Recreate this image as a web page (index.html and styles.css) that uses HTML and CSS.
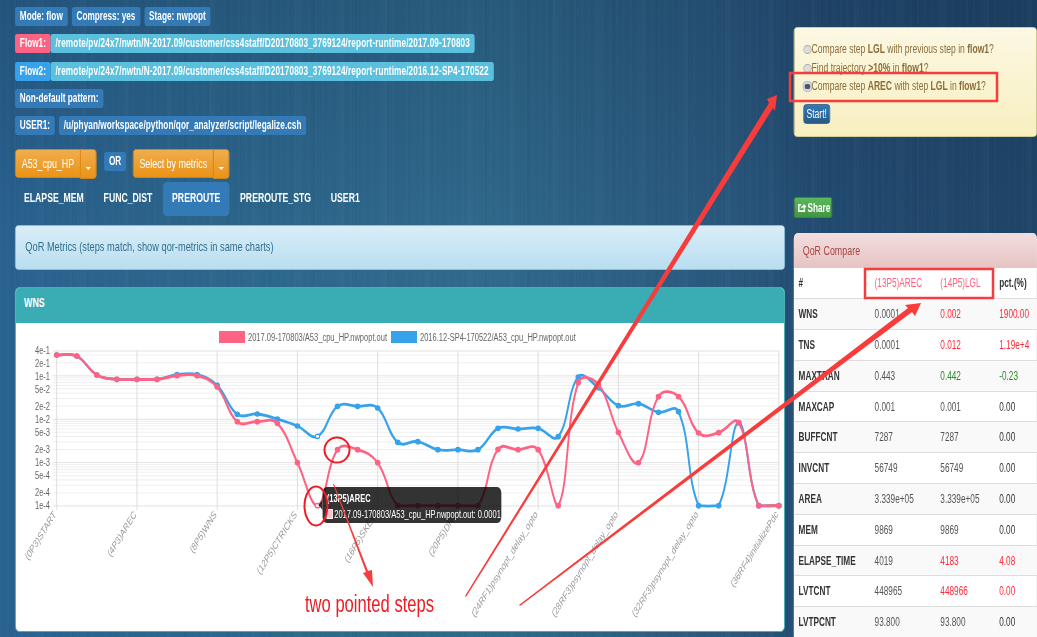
FILE: index.html
```html
<!DOCTYPE html>
<html lang="en">
<head>
    <meta charset="UTF-8">
    <meta name="viewport" content="width=device-width, initial-scale=1.0">
    <title>QoR Analyzer</title>
    <link rel="stylesheet" href="styles.css">
</head>
<body>
    <div class="page">
        <div class="main-col">
            <div class="info-rows">
                <div class="label-row">
                    <span class="label">Mode: flow</span>
                    <span class="label">Compress: yes</span>
                    <span class="label">Stage: nwpopt</span>
                </div>
                <div class="label-row joined">
                    <span class="label label-flow1">Flow1:</span>
                    <span class="label label-path">/remote/pv/24x7/nwtn/N-2017.09/customer/css4staff/D20170803_3769124/report-runtime/2017.09-170803</span>
                </div>
                <div class="label-row joined">
                    <span class="label label-flow2">Flow2:</span>
                    <span class="label label-path">/remote/pv/24x7/nwtn/N-2017.09/customer/css4staff/D20170803_3769124/report-runtime/2016.12-SP4-170522</span>
                </div>
                <div class="label-row">
                    <span class="label">Non-default pattern:</span>
                </div>
                <div class="label-row">
                    <span class="label">USER1:</span>
                    <span class="label label-script">/u/phyan/workspace/python/qor_analyzer/script/legalize.csh</span>
                </div>
            </div>

            <div class="select-row">
                <div class="btn-group">
                    <button class="btn-orange btn-a53">A53_cpu_HP</button>
                    <button class="btn-orange btn-caret"><span class="caret"></span></button>
                </div>
                <span class="label label-or">OR</span>
                <div class="btn-group">
                    <button class="btn-orange btn-metrics">Select by metrics</button>
                    <button class="btn-orange btn-caret"><span class="caret"></span></button>
                </div>
            </div>

            <ul class="nav-pills">
                <li>ELAPSE_MEM</li>
                <li>FUNC_DIST</li>
                <li class="active">PREROUTE</li>
                <li>PREROUTE_STG</li>
                <li>USER1</li>
            </ul>

            <div class="well-info">QoR Metrics (steps match, show qor-metrics in same charts)</div>

            <div class="chart-panel">
                <div class="chart-heading">WNS</div>
                <div class="chart-body">
                    <svg class="chart" id="wnsChart" viewBox="23 322 1121 308" xmlns="http://www.w3.org/2000/svg"></svg>
                    <div class="chart-tooltip">
                        <div class="tooltip-title">(13P5)AREC</div>
                        <div class="tooltip-line"><span class="tooltip-key"></span>2017.09-170803/A53_cpu_HP.nwpopt.out: 0.0001</div>
                    </div>
                </div>
            </div>
        </div>

        <div class="side-col">
            <div class="alert-box">
                <div class="radio-line"><span class="radio"></span>Compare step <b>LGL</b> with previous step in <b>flow1</b>?</div>
                <div class="radio-line"><span class="radio"></span>Find trajectory <b>&gt;10%</b> in <b>flow1</b>?</div>
                <div class="radio-line"><span class="radio checked"></span>Compare step <b>AREC</b> with step <b>LGL</b> in <b>flow1</b>?</div>
                <button class="btn-start">Start!</button>
            </div>

            <button class="btn-share">
                <svg viewBox="0 0 12 12" preserveAspectRatio="none" xmlns="http://www.w3.org/2000/svg"><path d="M9 7v3H2V3h3" fill="none" stroke="#fff" stroke-width="1.800"/><path d="M4.500 7.500C4.500 5 6 3.800 8 3.800V2l3.500 3L8 8V6C6.500 6 5.300 6.400 4.500 7.500z" fill="#fff"/></svg>Share
            </button>

            <div class="compare-panel">
                <div class="compare-heading">QoR Compare</div>
                <table class="compare-table">
                    <tr><th>#</th><th class="up-head">(13P5)AREC</th><th class="up-head">(14P5)LGL</th><th>pct.(%)</th></tr>
                    <tr><th>WNS</th><td>0.0001</td><td class="up">0.002</td><td class="up">1900.00</td></tr>
                    <tr><th>TNS</th><td>0.0001</td><td class="up">0.012</td><td class="up">1.19e+4</td></tr>
                    <tr><th>MAXTRAN</th><td>0.443</td><td class="down">0.442</td><td class="down">-0.23</td></tr>
                    <tr><th>MAXCAP</th><td>0.001</td><td>0.001</td><td>0.00</td></tr>
                    <tr><th>BUFFCNT</th><td>7287</td><td>7287</td><td>0.00</td></tr>
                    <tr><th>INVCNT</th><td>56749</td><td>56749</td><td>0.00</td></tr>
                    <tr><th>AREA</th><td>3.339e+05</td><td>3.339e+05</td><td>0.00</td></tr>
                    <tr><th>MEM</th><td>9869</td><td>9869</td><td>0.00</td></tr>
                    <tr><th>ELAPSE_TIME</th><td>4019</td><td class="up">4183</td><td class="up">4.08</td></tr>
                    <tr><th>LVTCNT</th><td>448965</td><td class="up">448966</td><td class="up">0.00</td></tr>
                    <tr><th>LVTPCNT</th><td>93.800</td><td>93.800</td><td>0.00</td></tr>
                </table>
            </div>
        </div>
    </div>

    <!-- hand drawn notes that sit on top of the page -->
    <svg class="notes" viewBox="0 0 1037 637" xmlns="http://www.w3.org/2000/svg">
        <rect class="note-box" x="790" y="73" width="207" height="28"/>
        <rect class="note-box" x="865" y="269" width="128" height="29"/>
        <ellipse class="note-ring" cx="316" cy="506" rx="11.500" ry="19.500"/>
        <circle class="note-ring" cx="337" cy="450" r="12.500"/>
        <polygon class="note-arrow" points="333,484 334,484 368,571 372,570 373,587 363,573 366,572"/>
        <polygon class="note-arrow" points="465,596 466,597 773,108 775,111 777,95 767,99 769,103"/>
        <polygon class="note-arrow" points="519,605 520,606 912,312 915,316 921,303 905,305 908,308"/>
        <text class="note-text" x="305" y="612" textLength="129" lengthAdjust="spacingAndGlyphs">two pointed steps</text>
    </svg>

    <script src="chart.js"></script>
</body>
</html>
```

FILE: styles.css
```css
* { margin: 0; padding: 0; box-sizing: border-box; }
html, body { height: 100%; overflow: hidden; }
body {
    font-family: "Liberation Sans", Arial, sans-serif;
    font-size: 13px;
    color: #333;
    background:
        repeating-linear-gradient(90deg, rgba(255, 255, 255, 0.012) 0 2px, rgba(0, 0, 0, 0.012) 2px 3px, transparent 3px 7px),
        repeating-linear-gradient(90deg, transparent 0 11px, rgba(0, 0, 0, 0.022) 11px 14px, transparent 14px 37px, rgba(255, 255, 255, 0.014) 37px 43px),
        linear-gradient(to bottom, rgba(12, 32, 58, 0.22) 0%, rgba(12, 32, 58, 0) 40%),
        linear-gradient(to right, #296290 0%, #2c668c 20%, #2f6a8c 47%, #29567c 72%, #234c72 78%, #1f4568 100%);
}

/* the whole page was captured squeezed sideways, so it is laid out wide and narrowed */
.page {
    display: flex;
    gap: 13px;
    width: 1514px;
    height: 637px;
    padding-left: 22px;
    overflow: hidden;
    transform: scaleX(0.6849);
    transform-origin: 0 0;
}
.main-col { flex: 0 0 1124px; display: flex; flex-direction: column; }
.side-col { flex: 0 0 355px; padding-top: 27px; }

.info-rows { display: flex; flex-direction: column; gap: 8.250px; padding-top: 7px; }
.label-row { display: flex; gap: 6px; }
.label-row.joined { gap: 0; }
.label {
    display: inline-block;
    height: 19px;
    line-height: 19px;
    padding: 0 7px;
    border-radius: 3px;
    background: #337ab7;
    color: #fff;
    font-size: 12px;
    font-weight: bold;
    white-space: nowrap;
}
.label-flow1 { background: #ff6384; }
.label-flow2 { background: #36a2eb; }
.label-path { background: #5bc0de; letter-spacing: 0.160px; }
.label-script { letter-spacing: 0.090px; }

.select-row { display: flex; align-items: flex-start; margin-top: 14px; }
.btn-group { display: flex; }
.btn-orange {
    height: 29px;
    border: 1px solid #e38d13;
    background: linear-gradient(to bottom, #f0ad4e 0%, #eb9316 100%);
    color: #fff;
    font-family: inherit;
    font-size: 13px;
}
.btn-a53 { width: 96px; border-radius: 5px 0 0 5px; }
.btn-metrics { width: 118px; border-radius: 5px 0 0 5px; }
.btn-caret { width: 24px; height: 30px; margin-left: -1px; border-radius: 0 5px 5px 0; padding-top: 2px; }
.caret { display: inline-block; border-top: 3px solid #fff; border-left: 4px solid transparent; border-right: 4px solid transparent; }
.label-or { width: 32px; margin: 3px 10px 0 11px; padding: 0; text-align: center; }

.nav-pills { display: flex; gap: 2.800px; list-style: none; margin-top: 3px; }
.nav-pills li {
    height: 34px;
    line-height: 32px;
    padding: 0 13px;
    border-radius: 5px;
    color: #fff;
    font-size: 12.700px;
    font-weight: bold;
}
.nav-pills li.active { background: #337ab7; }

.well-info {
    height: 45px;
    line-height: 41px;
    margin-top: 9px;
    padding-left: 14px;
    border: 1px solid #9acfea;
    border-radius: 5px;
    background: linear-gradient(to bottom, #d9edf7 0%, #b9def0 100%);
    color: #31708f;
    font-size: 13.500px;
}

.chart-panel { margin-top: 17px; border: 1.500px solid #3aacb3; border-radius: 6px; overflow: hidden; background: #fff; }
.chart-heading { height: 35px; line-height: 30px; padding-left: 12px; background: #3aacb3; color: #fff; font-weight: bold; font-size: 13px; }
.chart-body { position: relative; height: 308px; }
.chart { display: block; width: 1121px; height: 308px; }
.grid-line { stroke: #ececec; stroke-width: 1; }
.grid-line.major { stroke: #ddd; }
.grid-line.column { stroke: #ddd; stroke-width: 1.400; }
.axis-text { font-size: 11px; fill: #666; text-anchor: end; }
.legend-text { font-size: 11px; fill: #666; }
.tick-text { font-size: 11px; fill: #999; text-anchor: end; }
.series { fill: none; stroke-width: 2.800; }
.series-flow1 { stroke: #ff6384; }
.series-flow2 { stroke: #36a2eb; }
.point-flow1 { fill: #ff6384; }
.point-flow2 { fill: #36a2eb; }
.point-hover { fill: #fff; stroke-width: 1.500; }
.point-hover.point-flow1 { stroke: #ff6384; }
.point-hover.point-flow2 { stroke: #36a2eb; }

.chart-tooltip {
    position: absolute;
    left: 448px;
    top: 164px;
    width: 261px;
    height: 36px;
    padding: 3px 0 0 6px;
    border-radius: 6px;
    background: rgba(0, 0, 0, 0.8);
    color: #fff;
    font-size: 11px;
    line-height: 16px;
    white-space: nowrap;
}
.chart-tooltip::before {
    content: "";
    position: absolute;
    left: -6px;
    top: 13px;
    border-top: 5px solid transparent;
    border-bottom: 5px solid transparent;
    border-right: 6px solid rgba(0, 0, 0, 0.8);
}
.tooltip-title { font-weight: bold; }
.tooltip-key { display: inline-block; width: 9px; height: 10px; margin-right: 2px; vertical-align: -1px; background: #ffc0cc; border: 1px solid #fff; }

.alert-box {
    height: 110px;
    padding: 12px 13px;
    border: 1px solid #f5e79e;
    border-radius: 5px;
    background: linear-gradient(to bottom, #fcf8e3 0%, #f8efc0 100%);
    color: #8a6d3b;
    font-size: 12.500px;
}
.radio-line { height: 18.500px; line-height: 18px; white-space: nowrap; }
.radio { display: inline-block; width: 12px; height: 9px; border-radius: 50%; background: #ddd; border: 1px solid #aaa; vertical-align: -1px; }
.radio.checked { background: #555; border: 2px solid #cfd8e8; box-shadow: 0 0 0 1px #a9c2e2; border-radius: 40%; }
.btn-start {
    display: block;
    width: 39px;
    height: 20px;
    margin-top: 8px;
    border: 1px solid #245580;
    border-radius: 4px;
    background: linear-gradient(to bottom, #337ab7 0%, #265a88 100%);
    color: #fff;
    font-family: inherit;
    font-size: 12.500px;
}
.btn-share {
    display: flex;
    align-items: center;
    width: 56px;
    height: 21px;
    margin-top: 60px;
    padding-left: 4px;
    border: 1px solid #3e8f3e;
    border-radius: 3px;
    background: linear-gradient(to bottom, #5cb85c 0%, #419641 100%);
    color: #fff;
    font-family: inherit;
    font-size: 12px;
    font-weight: bold;
}
.btn-share svg { width: 14px; height: 11px; margin-right: 1px; }

.compare-panel { margin-top: 15px; border-radius: 6px 6px 0 0; overflow: hidden; background: #fff; }
.compare-heading {
    height: 35px;
    line-height: 35px;
    padding-left: 13px;
    background: linear-gradient(to bottom, #f2dede 0%, #e7c3c3 100%);
    color: #a94442;
    font-size: 13px;
}
.compare-table { width: 355px; border-collapse: collapse; table-layout: fixed; font-size: 12px; }
.compare-table tr { height: 30.800px; }
.compare-table tr:nth-child(even) { background: #f9f9f9; }
.compare-table tr + tr { border-top: 1px solid #ddd; }
.compare-table th, .compare-table td { padding: 0 0 0 7px; text-align: left; white-space: nowrap; }
.compare-table th { color: #333; font-weight: bold; }
.compare-table td { color: #555; }
.compare-table th:nth-child(1) { width: 111px; }
.compare-table th:nth-child(2) { width: 96px; }
.compare-table th:nth-child(3) { width: 86px; }
.compare-table th.up-head { color: #ff6384; font-weight: normal; }
.compare-table td:nth-child(4) { color: #333; }
.compare-table td.up { color: #ff2a3c; }
.compare-table td.down { color: #2a8a2a; }

.notes { position: absolute; left: 0; top: 0; width: 1037px; height: 637px; pointer-events: none; }
.note-box { fill: none; stroke: #f83c3c; stroke-width: 2.500; }
.note-ring { fill: none; stroke: #ee1c24; stroke-width: 2; }
.note-arrow { fill: #f83c3c; }
.note-text { font-size: 23px; fill: #ee1c24; }
```

FILE: chart.js
```js
// WNS chart, points are stored as pixel rows taken off the y axis
const flow1 = [222,225,282,295,295,295,284,284,318,422,422,427,545,674,506,506,545,674,674,674,674,674,505,506,506,674,305,310,454,545,347,347,456,455,425,674,674];
const flow2 = [222,225,282,295,295,295,281,281,313,400,399,414,435,466,376,376,381,484,482,506,506,506,442,444,442,467,288,320,374,368,394,392,674,674,425,674,674];
const xLabels = ['(0P3)START', '(4P3)AREC', '(8P5)WNS', '(12P5)CTRICKS', '(16P5)SKEW', '(20P5)DRC',
    '(24RF1)psynopt_delay_opto', '(28RF3)psynopt_delay_opto', '(32RF3)psynopt_delay_opto', '(36RF4)initializePdc'];
const yTicks = [['4e-1', 350], ['2e-1', 363], ['1e-1', 376], ['5e-2', 389], ['2e-2', 406], ['1e-2', 419],
    ['5e-3', 432], ['2e-3', 449], ['1e-3', 462], ['5e-4', 475], ['2e-4', 492], ['1e-4', 505]];

// x values are worked out in screen pixels, WIDE undoes the page's scaleX
const WIDE = 1 / 0.6849;
const LEFT = 56.7, STEP = 20.06, TOP = 350, BOTTOM = 505, DECADE = 43.4, RIGHT = 779;
const svg = document.getElementById('wnsChart');

function add(tag, attrs, text) {
    const el = document.createElementNS('http://www.w3.org/2000/svg', tag);
    for (const key in attrs) el.setAttribute(key, attrs[key]);
    if (text) el.textContent = text;
    svg.appendChild(el);
    return el;
}

const xAt = (i) => (LEFT + i * STEP) * WIDE;
const toPoints = (rows) => rows.map((z, i) => ({ x: xAt(i), y: 280 + z / 3 }));
const capY = (y) => Math.min(BOTTOM, Math.max(TOP, y));

// same spline as chart.js with tension 0.4, control points kept inside the chart area
function splinePath(pts) {
    const t = 0.4;
    const ctrl = pts.map((p, i) => {
        const a = pts[i - 1] || p, b = pts[i + 1] || p;
        const d1 = Math.hypot(p.x - a.x, p.y - a.y), d2 = Math.hypot(b.x - p.x, b.y - p.y);
        const sum = d1 + d2 || 1;
        const fa = t * d1 / sum, fb = t * d2 / sum;
        return {
            px: p.x - fa * (b.x - a.x), py: capY(p.y - fa * (b.y - a.y)),
            nx: p.x + fb * (b.x - a.x), ny: capY(p.y + fb * (b.y - a.y))
        };
    });
    let d = `M${pts[0].x} ${pts[0].y}`;
    for (let i = 1; i < pts.length; i++) {
        d += `C${ctrl[i - 1].nx} ${ctrl[i - 1].ny} ${ctrl[i].px} ${ctrl[i].py} ${pts[i].x} ${pts[i].y}`;
    }
    return d;
}

// log grid, nine lines a decade
const gridLeft = (LEFT - 4) * WIDE, gridRight = RIGHT * WIDE;
for (let dec = 0; dec < 4; dec++) {
    for (let m = 1; m <= 9; m++) {
        const y = BOTTOM - (dec + Math.log10(m)) * DECADE;
        if (y < TOP) continue;
        add('line', { x1: gridLeft, x2: gridRight, y1: y, y2: y, class: m === 1 ? 'grid-line major' : 'grid-line' });
    }
}
add('line', { x1: gridLeft, x2: gridRight, y1: TOP, y2: TOP, class: 'grid-line major' });
xLabels.forEach((label, n) => {
    const x = xAt(n * 4);
    add('line', { x1: x, x2: x, y1: TOP, y2: BOTTOM + 4, class: 'grid-line column' });
    const ty = BOTTOM + 9;
    add('text', { x: x, y: ty, class: 'tick-text', transform: `rotate(-48 ${x} ${ty})` }, label);
});
yTicks.forEach(([label, y]) => add('text', { x: 50 * WIDE, y: y + 3.5, class: 'axis-text' }, label));

// legend
add('rect', { x: 219 * WIDE, y: 330, width: 26 * WIDE, height: 12, class: 'point-flow1' });
add('text', { x: 248 * WIDE, y: 340, class: 'legend-text' }, '2017.09-170803/A53_cpu_HP.nwpopt.out');
add('rect', { x: 391 * WIDE, y: 330, width: 26 * WIDE, height: 12, class: 'point-flow2' });
add('text', { x: 420 * WIDE, y: 340, class: 'legend-text' }, '2016.12-SP4-170522/A53_cpu_HP.nwpopt.out');

// the first data set is painted last, as the original does
[['flow2', flow2], ['flow1', flow1]].forEach(([name, rows]) => {
    const pts = toPoints(rows);
    add('path', { d: splinePath(pts), class: `series series-${name}` });
    pts.forEach((p, i) => {
        const hover = i === 13;
        const r = hover ? 2.2 : 2.8;
        add('ellipse', { cx: p.x, cy: p.y, rx: r * WIDE, ry: r, class: hover ? `point-hover point-${name}` : `point-${name}` });
    });
});
```
